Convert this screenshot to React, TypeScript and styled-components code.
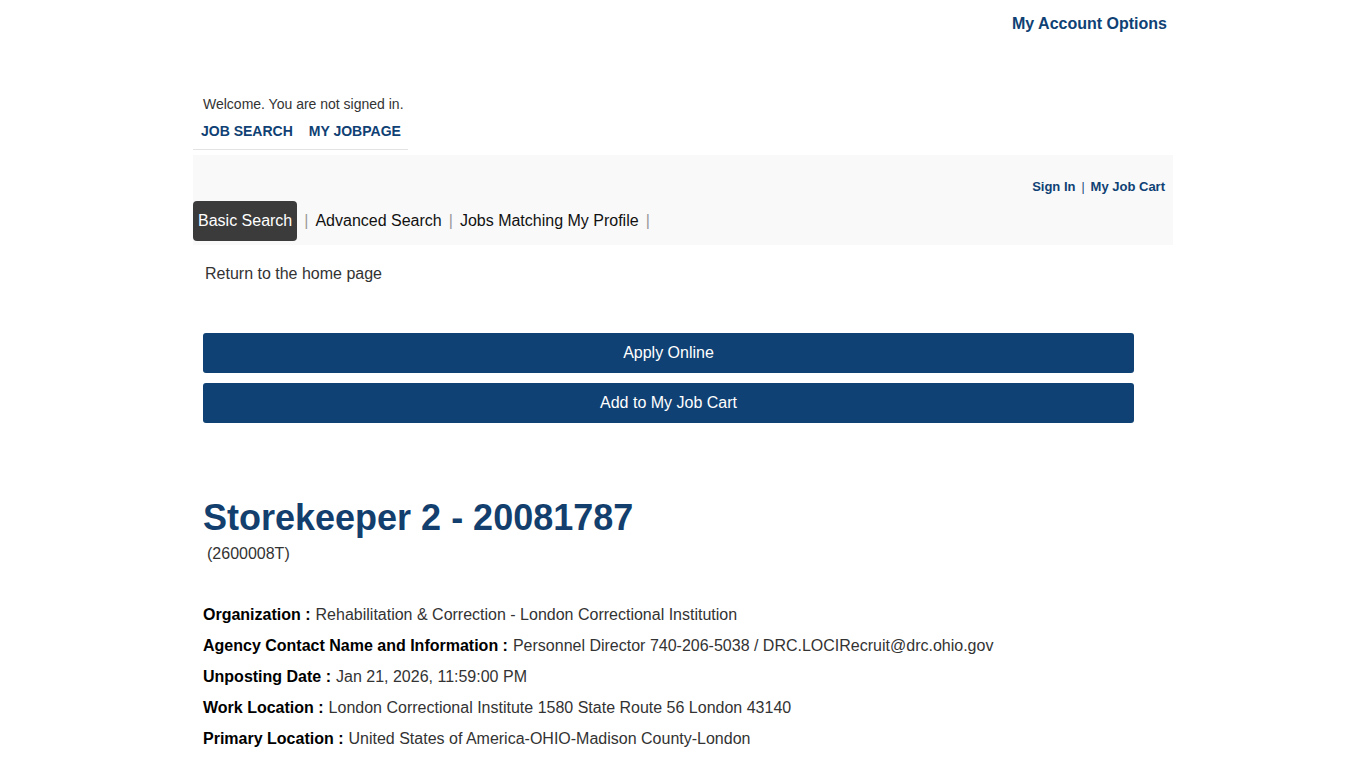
import styled, { createGlobalStyle } from "styled-components";

const GlobalStyle = createGlobalStyle`
  body {
    margin: 0;
    background: #ffffff;
    font-family: "Liberation Sans", Arial, sans-serif;
    color: #333333;
  }
`;

const NAVY = "#0f4174";

interface DetailItem {
  label: string;
  value: string;
}

const details: DetailItem[] = [
  { label: "Organization", value: "Rehabilitation & Correction - London Correctional Institution" },
  {
    label: "Agency Contact Name and Information",
    value: "Personnel Director 740-206-5038 / DRC.LOCIRecruit@drc.ohio.gov",
  },
  { label: "Unposting Date", value: "Jan 21, 2026, 11:59:00 PM" },
  { label: "Work Location", value: "London Correctional Institute 1580 State Route 56 London 43140" },
  { label: "Primary Location", value: "United States of America-OHIO-Madison County-London" },
];

const tabs = ["Basic Search", "Advanced Search", "Jobs Matching My Profile"];

export default function App() {
  return (
    <>
      <GlobalStyle />
      <Page>
        <TopBar>
          <AccountLink href="#">My Account Options</AccountLink>
        </TopBar>

        <WelcomeBox>
          <WelcomeText>Welcome. You are not signed in.</WelcomeText>
          <MainNav>
            <MainNavLink href="#">Job Search</MainNavLink>
            <MainNavLink href="#">My Jobpage</MainNavLink>
          </MainNav>
        </WelcomeBox>

        <SearchBar>
          <UserLinks>
            <UserLink href="#">Sign In</UserLink>
            <UserSep>|</UserSep>
            <UserLink href="#">My Job Cart</UserLink>
          </UserLinks>
          <Tabs>
            {tabs.map((tab, i) => (
              <TabItem key={tab}>
                <Tab $active={i === 0}>{tab}</Tab>
                <TabSep>|</TabSep>
              </TabItem>
            ))}
          </Tabs>
        </SearchBar>

        <ReturnLink href="#">Return to the home page</ReturnLink>

        <Actions>
          <ActionButton>Apply Online</ActionButton>
          <ActionButton>Add to My Job Cart</ActionButton>
        </Actions>

        <JobHeader>
          <JobTitle>Storekeeper 2 - 20081787</JobTitle>
          <JobCode>(2600008T)</JobCode>
        </JobHeader>

        <DetailList>
          {details.map((d) => (
            <DetailRow key={d.label}>
              <DetailLabel>{d.label} :</DetailLabel>
              <DetailValue>{d.value}</DetailValue>
            </DetailRow>
          ))}
        </DetailList>
      </Page>
    </>
  );
}

const Page = styled.div`
  width: 980px;
  margin: 0 auto;
`;

const TopBar = styled.div`
  display: flex;
  justify-content: flex-end;
  padding: 15px 6px 0 0;
`;

const AccountLink = styled.a`
  font-size: 16px;
  line-height: 18px;
  font-weight: bold;
  color: ${NAVY};
  text-decoration: none;
`;

const WelcomeBox = styled.div`
  width: 215px;
  margin-top: 63px;
  padding-bottom: 10px;
  border-bottom: 1px solid #e3e3e3;
`;

const WelcomeText = styled.p`
  margin: 0;
  padding-left: 10px;
  font-size: 14px;
  line-height: 16px;
  color: #333333;
`;

const MainNav = styled.nav`
  display: flex;
  gap: 16px;
  margin-top: 11px;
  padding-left: 8px;
`;

const MainNavLink = styled.a`
  font-size: 14px;
  line-height: 16px;
  font-weight: bold;
  text-transform: uppercase;
  color: ${NAVY};
  text-decoration: none;
`;

const SearchBar = styled.div`
  margin-top: 5px;
  height: 90px;
  box-sizing: border-box;
  padding-top: 25px;
  background: #f9f9f9;
`;

const UserLinks = styled.div`
  display: flex;
  justify-content: flex-end;
  align-items: center;
  gap: 6px;
  padding-right: 8px;
  font-size: 13px;
  line-height: 14px;
  font-weight: bold;
`;

const UserLink = styled.a`
  color: ${NAVY};
  text-decoration: none;
`;

const UserSep = styled.span`
  color: ${NAVY};
  font-weight: normal;
  font-size: 12px;
`;

const Tabs = styled.div`
  display: flex;
  align-items: center;
  margin-top: 7px;
`;

const TabItem = styled.div`
  display: flex;
  align-items: center;
`;

const Tab = styled.a<{ $active?: boolean }>`
  display: flex;
  align-items: center;
  height: 40px;
  padding: 0 ${({ $active }) => ($active ? "5px" : "0")};
  border-radius: 4px;
  background: ${({ $active }) => ($active ? "#3b3b3b" : "transparent")};
  color: ${({ $active }) => ($active ? "#ffffff" : "#111111")};
  font-size: 16px;
  cursor: pointer;
`;

const TabSep = styled.span`
  margin: 0 7px;
  color: #999999;
  font-size: 16px;
`;

const ReturnLink = styled.a`
  display: block;
  margin-top: 20px;
  padding-left: 12px;
  font-size: 16px;
  line-height: 18px;
  color: #333333;
  text-decoration: none;
`;

const Actions = styled.div`
  display: flex;
  flex-direction: column;
  gap: 10px;
  width: 931px;
  margin: 50px 0 0 10px;
`;

const ActionButton = styled.button`
  height: 40px;
  border: none;
  border-radius: 3px;
  background: ${NAVY};
  color: #ffffff;
  font-family: "Liberation Sans", Arial, sans-serif;
  font-size: 16px;
  cursor: pointer;
`;

const JobHeader = styled.div`
  margin: 75px 0 0 10px;
`;

const JobTitle = styled.h1`
  margin: 0;
  font-size: 36px;
  line-height: 40px;
  font-weight: bold;
  color: #133f6e;
`;

const JobCode = styled.p`
  margin: 7px 0 0 4px;
  font-size: 16px;
  line-height: 18px;
  color: #333333;
`;

const DetailList = styled.div`
  display: flex;
  flex-direction: column;
  margin: 36px 0 0 10px;
`;

const DetailRow = styled.div`
  display: flex;
  gap: 5px;
  font-size: 16px;
  line-height: 31px;
`;

const DetailLabel = styled.span`
  font-weight: bold;
  color: #000000;
`;

const DetailValue = styled.span`
  color: #333333;
`;
